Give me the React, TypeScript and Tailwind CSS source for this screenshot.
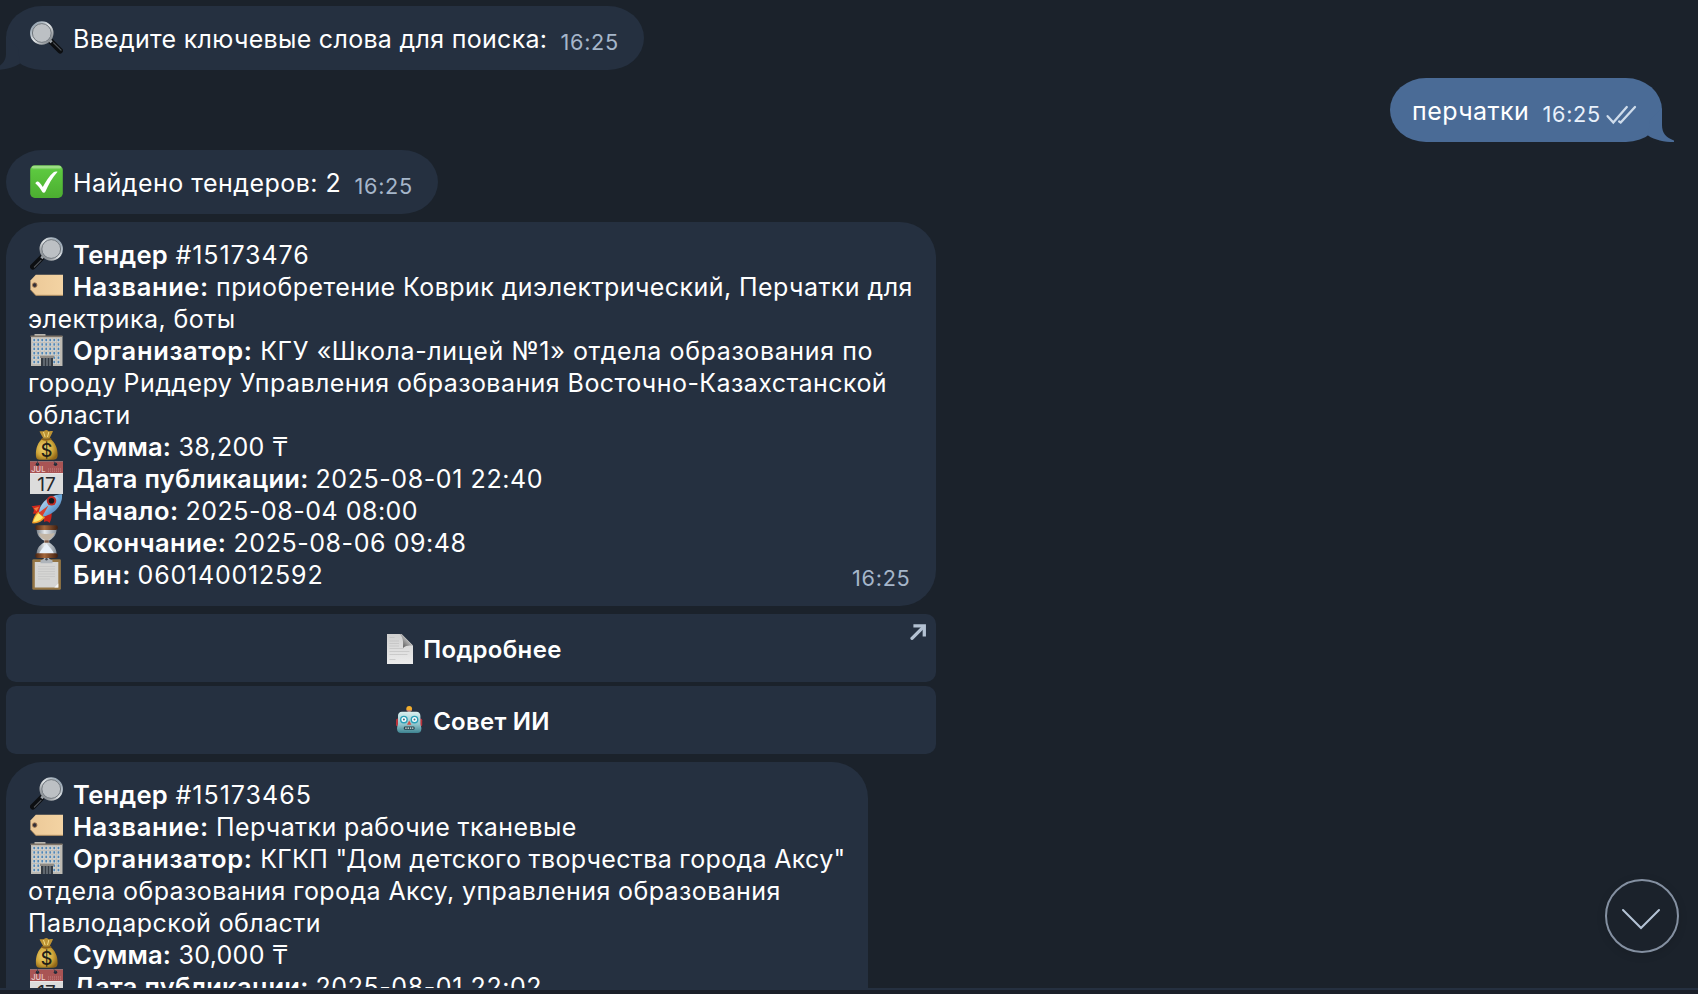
import type { ReactNode } from "react";

type IconProps = { className?: string };

const ICON = "h-[33px] w-[33px] shrink-0";

function Gradients() {
  return (
    <svg className="absolute h-0 w-0" aria-hidden="true">
      <defs>
        <linearGradient id="green" x1="0" y1="0" x2="0" y2="1">
          <stop offset="0" stopColor="#7fd262" />
          <stop offset=".16" stopColor="#5cc83f" />
          <stop offset="1" stopColor="#4cae31" />
        </linearGradient>
        <linearGradient id="rim" x1="0" y1="0" x2="1" y2="1">
          <stop offset="0" stopColor="#7d8fa0" />
          <stop offset=".5" stopColor="#e3e6e8" />
          <stop offset="1" stopColor="#6a7076" />
        </linearGradient>
        <linearGradient id="tag" x1="0" y1="0" x2="1" y2="0">
          <stop offset="0" stopColor="#ecc998" />
          <stop offset="1" stopColor="#f3d3a3" />
        </linearGradient>
        <radialGradient id="gold" cx=".4" cy=".45" r=".65">
          <stop offset="0" stopColor="#f0d878" />
          <stop offset=".6" stopColor="#d0a63a" />
          <stop offset="1" stopColor="#8e6516" />
        </radialGradient>
        <linearGradient id="hull" x1="0" y1="0" x2="1" y2="1">
          <stop offset="0" stopColor="#d5e9f8" />
          <stop offset=".5" stopColor="#7fb4e0" />
          <stop offset="1" stopColor="#2f62a5" />
        </linearGradient>
        <linearGradient id="glass" x1="0" y1="0" x2="1" y2="0">
          <stop offset="0" stopColor="#7b838c" />
          <stop offset=".4" stopColor="#e6e9ec" />
          <stop offset="1" stopColor="#88919b" />
        </linearGradient>
        <linearGradient id="wood" x1="0" y1="0" x2="1" y2="0">
          <stop offset="0" stopColor="#4a2412" />
          <stop offset=".4" stopColor="#a4673c" />
          <stop offset="1" stopColor="#3f1e0f" />
        </linearGradient>
        <linearGradient id="robot" x1="0" y1="0" x2="0" y2="1">
          <stop offset="0" stopColor="#d9eff0" />
          <stop offset=".6" stopColor="#8fc4cb" />
          <stop offset="1" stopColor="#3c8290" />
        </linearGradient>
        <linearGradient id="page" x1="0" y1="0" x2="0" y2="1">
          <stop offset="0" stopColor="#cfcfcf" />
          <stop offset="1" stopColor="#ececec" />
        </linearGradient>
        <linearGradient id="curl" x1="0" y1="1" x2="1" y2="0">
          <stop offset="0" stopColor="#3d3d3d" />
          <stop offset=".5" stopColor="#a5a5a5" />
          <stop offset="1" stopColor="#f5f5f5" />
        </linearGradient>
      </defs>
    </svg>
  );
}

function LensLeft({ className = ICON }: IconProps) {
  return (
    <svg viewBox="0 0 33 33" className={className}>
      <path d="M21 20.5 30.2 29.8" stroke="#0c0e11" strokeWidth="5.6" strokeLinecap="round" />
      <path d="M23.6 21.8 31 29.2" stroke="#4d5157" strokeWidth="1.2" strokeLinecap="round" />
      <path d="m18.6 18.2 3 3" stroke="#9ea4aa" strokeWidth="3" />
      <circle cx="11.8" cy="12" r="10.7" fill="#b5babe" stroke="url(#rim)" strokeWidth="2.1" />
      <circle cx="11.8" cy="12" r="9.4" fill="#bcc0c4" stroke="#686e75" strokeWidth=".9" />
    </svg>
  );
}

function LensRight({ className = ICON }: IconProps) {
  return (
    <svg viewBox="0 0 33 33" className={className}>
      <g transform="matrix(-1 0 0 1 33 0)">
        <path d="M21 20.5 30.2 29.8" stroke="#0c0e11" strokeWidth="5.6" strokeLinecap="round" />
        <path d="M22 23.4 28.6 30" stroke="#4d5157" strokeWidth="1.2" strokeLinecap="round" />
        <path d="m18.6 18.2 3 3" stroke="#9ea4aa" strokeWidth="3" />
        <circle cx="11.8" cy="12" r="10.7" fill="#b5babe" stroke="url(#rim)" strokeWidth="2.1" />
        <circle cx="11.8" cy="12" r="9.4" fill="#bcc0c4" stroke="#686e75" strokeWidth=".9" />
      </g>
    </svg>
  );
}

function CheckBox({ className = ICON }: IconProps) {
  return (
    <svg viewBox="0 0 33 33" className={className}>
      <rect x=".2" y=".3" width="32.6" height="32.6" rx="4.6" fill="url(#green)" />
      <rect x="2" y="1" width="29" height="2.6" rx="1.3" fill="#a9e394" opacity=".75" />
      <path d="M5.300 18.200c1-1.600 2.600-2.200 3.900-1 1.400 1.300 2.500 3 3.600 4.900C15.700 16.300 19.300 11 23.600 7.200c1.100-.9 2.700-1 4-.5-5.200 5.700-9 12.500-12.400 20.300-.4.900-2.300 1-2.900 0-2-3.500-4.100-6.300-7-8.800z" fill="#fff" />
    </svg>
  );
}

function TagIcon({ className = ICON }: IconProps) {
  return (
    <svg viewBox="0 0 33 33" className={className}>
      <path d="M5.800 5.800H33v20.600H5.800L.4 20.600v-9z" fill="url(#tag)" />
      <path d="M5.800 26.300H33M.4 20.600l5.400 5.700" stroke="#b48e5c" strokeWidth=".8" fill="none" />
      <circle cx="4.700" cy="16.100" r="2.300" fill="#33303a" stroke="#a57b52" strokeWidth=".9" />
    </svg>
  );
}

function Building({ className = ICON }: IconProps) {
  const cols = [2.600, 6.600, 10.600, 14.600, 18.600, 22.600, 26.800];
  const rows = [5.4, 9.800, 14.200, 18.600, 23, 27.400];
  return (
    <svg viewBox="0 0 33 33" className={className}>
      <path d="M4.500 1h11v2.500h-11z" fill="#b9b6af" />
      <path d="M1 3h31.500v30H1z" fill="#bdbab3" />
      <path d="M.5 2.600h32v1.500H.5z" fill="#7f7468" />
      {rows.map((y) =>
        cols.map((x) => (
          <g key={`${x}-${y}`}>
            <rect x={x} y={y} width="3.200" height="3.500" fill="#e6e4de" />
            <rect x={x + 0.7} y={y + 0.4} width="1.900" height="2.500" fill="#5286b5" />
          </g>
        )),
      )}
      <path d="M11 24.300h12V33H11z" fill="#353b43" />
      <path d="M10 22.800h14v2.200H10z" fill="#8f8b86" />
      <path d="M14 25v8M17 25v8M20 25v8" stroke="#8b949c" strokeWidth="1" />
    </svg>
  );
}

function MoneyBag({ className = ICON }: IconProps) {
  return (
    <svg viewBox="0 0 33 33" className={className}>
      <path d="M9.500 2.500c2.500-.8 4 .6 5.300-.9 1.300-1.200 2.500-.2 3.500.4 1.500.8 3-.5 4.700.3-1 2.500-2.500 5-3.600 7.200h-6c-1.200-2.200-2.800-4.500-3.900-7z" fill="#bd9334" />
      <path d="m13.500 3 1.600 5M18.800 3l-1.300 5" stroke="#f3db83" strokeWidth="1" />
      <path d="M12.500 9.500h7.500c5 3.500 7.900 10 7.600 16.500-.1 4-2 4.800-5.600 4.800H10.500c-3.500 0-4.500-1.200-4.600-4.800-.2-6.500 2-13 6.600-16.500z" fill="url(#gold)" />
      <path d="M11.600 9.700c3 1.500 6.700 1.300 9.600-.2" stroke="#8b5f18" strokeWidth="1.600" fill="none" />
      <text x="16.500" y="28" textAnchor="middle" className="fill-[#222018] font-['Inter'] text-[18px] font-medium">$</text>
    </svg>
  );
}

function CalendarIcon({ className = ICON }: IconProps) {
  return (
    <svg viewBox="0 0 33 33" className={className}>
      <path d="M0 .5h33v32.500H0z" fill="#dcdcdc" />
      <path d="M0 .5h33v11.800H0z" fill="#a95454" />
      <path d="M0 12.300h33v.8H0z" fill="#f5f5f5" />
      <circle cx="7.500" cy="3.300" r="1.700" fill="#232a38" />
      <circle cx="25.500" cy="3.300" r="1.700" fill="#232a38" />
      <path d="M7.500 3V.4M25.500 3 24 .4" stroke="#3d4250" strokeWidth="1" />
      <path d="M18 8h13.500M18 10.200h13.500" stroke="#c58080" strokeWidth="1" strokeDasharray="1 1" />
      <text x="1.300" y="11.300" className="fill-[#e9cccc] font-['Inter'] text-[7.500px] font-medium">JUL</text>
      <text x="16.500" y="29.800" textAnchor="middle" className="fill-[#26282c] font-['Inter'] text-[19px]">17</text>
    </svg>
  );
}

function Rocket({ className = ICON }: IconProps) {
  return (
    <svg viewBox="0 0 33 33" className={className}>
      <path d="M10.500 12 1.500 13.300C3.500 15 5 17.500 2.800 20.500l5.700.5z" fill="#d3281c" />
      <path d="M3.800 15.300 9 13.800l-2.500 4.700z" fill="#f07a3c" />
      <path d="M14 23.500 21.500 19.500c.5 4-.3 7.500-2 10.500-1.500-1.700-3.200-2.200-5.500-1z" fill="#c8231b" />
      <path d="M8.500 18.500c-3 2-5.500 7-6.500 11.800 4.500.8 10-1.500 13-5.800z" fill="#f09a25" />
      <path d="M8.800 20C6 22 4 26 3.200 29.100 7 29 10.500 27.500 13 24.600z" fill="#fbe86e" />
      <path d="M32 1.500c.6 8-3.500 14.500-10 18.500-2.500 1.600-5.500 2.900-8 3.500l-5-5.100C10.500 9.500 19 2 32 1.500z" fill="url(#hull)" />
      <path d="M32 1.500c-2.500 0-5 .4-7 1 2.500 1 4.700 3 5.800 5.200.8-2 1.200-4 1.200-6.200z" fill="#6aa5d8" />
      <circle cx="21.500" cy="7.800" r="4.800" fill="#bf2a22" />
      <circle cx="21.500" cy="7.800" r="2.800" fill="#14171d" />
      <path d="M8.500 20 18.500 12.500 12.500 23z" fill="#d8402c" />
    </svg>
  );
}

function Hourglass({ className = ICON }: IconProps) {
  return (
    <svg viewBox="0 0 33 33" className={className}>
      <path d="M6.800 3h19.700c.4 5.500-1.800 9.500-7.300 12.600v2C24.700 21 27 25 26.500 30H6.800c-.5-5 1.500-9 7.200-12.400v-2C8.300 12.500 6.300 8.500 6.800 3z" fill="url(#glass)" />
      <path d="M8.500 8c5 1.400 11 1.400 16.200 0-1 3.400-3.700 5.600-7.300 7.400h-1.600C12 13.700 9.500 11.400 8.500 8z" fill="#c3b6a6" />
      <path d="M14.300 15.300h4.500v2.400h-4.500z" fill="#7d5a46" />
      <path d="M16.600 18.500c2.500 3.500 6 6 7.500 10.500H9c1.500-4.500 5-7 7.600-10.500z" fill="#e9f1fa" />
      <rect x="5.300" y=".3" width="22.500" height="4.700" rx="1.900" fill="url(#wood)" />
      <rect x="5.300" y="28.300" width="22.500" height="4.600" rx="1.900" fill="url(#wood)" />
    </svg>
  );
}

function Clipboard({ className = ICON }: IconProps) {
  return (
    <svg viewBox="0 0 33 33" className={className}>
      <rect x="2.300" y="2.300" width="28.600" height="30.500" rx="1.300" fill="#947544" />
      <path d="M4.800 5h23.500v25.500H4.800z" fill="#d5d5d3" />
      <path d="M8 9.500h17M8 12h17M8 14.500h17M8 17h17M8 19.500h17M8 22h12" stroke="#c3c3c1" strokeWidth=".7" />
      <path d="m28.300 26.500-4 4h4z" fill="#f6f6f6" />
      <path d="M10.500 3.300c2-.3 3-.8 3.500-2.300h5c.5 1.500 1.500 2 3.500 2.300v2.900h-12z" fill="#aeb4ba" />
      <circle cx="16.500" cy="2.300" r="1.200" fill="#454b55" />
    </svg>
  );
}

function PageIcon() {
  return (
    <svg viewBox="0 0 30 32" className="mt-px h-8 w-[30px] shrink-0">
      <path d="M2 1h14.500L28 12.500V31H2z" fill="url(#page)" />
      <path d="M4.500 4.500h5M4.500 8h9.500M4.500 10.500h9.500M4.500 13h9.500M4.500 15.500h14M4.500 18.500h20M4.500 21.500h18M4.500 26.500h6" stroke="#c0c0c0" strokeWidth=".7" />
      <path d="M14.500 1c3.500 2.500 4 8 3.500 14 3-2.500 7-3 10-2L16.500 1z" fill="url(#curl)" />
    </svg>
  );
}

function RobotIcon() {
  return (
    <svg viewBox="0 0 30 30" className="h-[30px] w-[30px] shrink-0">
      <path d="M13.700 4h3v4h-3z" fill="#55505c" />
      <circle cx="15.200" cy="3.800" r="2.900" fill="#f3ae2d" />
      <path d="M12.400 4.600c1.700 1.300 3.900 1.300 5.600 0-.5 2.400-5 3-5.600 0z" fill="#b66a90" />
      <rect x="2" y="13.500" width="4" height="8" rx="1.800" fill="#b9323b" />
      <rect x="24.200" y="13.500" width="4" height="8" rx="1.800" fill="#b9323b" />
      <path d="M8 6.800h14.400c2.600 0 4 1.600 4 4.300v8c0 1.300 1 2.500 1 4.500 0 3-1.500 4.500-4 4.500H7c-2.500 0-4-1.500-4-4.500 0-2 1-3.200 1-4.500v-8c0-2.700 1.400-4.300 4-4.300z" fill="url(#robot)" />
      <circle cx="9.900" cy="14.600" r="3.900" fill="#2a9fb8" />
      <circle cx="20.500" cy="14.600" r="3.900" fill="#2a9fb8" />
      <circle cx="9.900" cy="14.600" r="2.500" fill="#f4fdff" />
      <circle cx="20.500" cy="14.600" r="2.500" fill="#f4fdff" />
      <circle cx="9.900" cy="14.600" r="1" fill="#4a6a75" />
      <circle cx="20.500" cy="14.600" r="1" fill="#4a6a75" />
      <path d="m15.200 15.500 2.200 4.300H13z" fill="#d64f45" />
      <rect x="9.800" y="21.500" width="10.800" height="3.200" rx="1.300" fill="#26414b" />
      <path d="M11.200 23.100h8.200" stroke="#e8f4f4" strokeWidth="1.400" strokeDasharray="1.500 .8" />
    </svg>
  );
}

function Time({ className = "" }: { className?: string }) {
  return <span className={`text-[21.700px] leading-8 tracking-[0.700px] text-[#a6b6ca] ${className}`}>16:25</span>;
}

function Row({ icon, children }: { icon?: ReactNode; children: ReactNode }) {
  return (
    <div className="flex h-8 items-start whitespace-nowrap leading-8">
      {icon && <span className="-mt-[2px] mr-[10px] ml-[2px] flex shrink-0">{icon}</span>}
      {children}
    </div>
  );
}

function Label({ className, children }: { className: string; children: ReactNode }) {
  return <b className={`shrink-0 text-[25.500px] font-semibold ${className}`}>{children}</b>;
}

function ActionButton({ className, children }: { className: string; children: ReactNode }) {
  return (
    <button className={`relative flex h-[68px] w-[930px] items-center justify-center rounded-[10px] bg-[#253040] text-[24px] font-semibold ${className}`}>
      {children}
    </button>
  );
}

export default function App() {
  return (
    <div className="flex h-[994px] w-full flex-col overflow-hidden bg-[#1b222b] font-['Inter','Liberation_Sans',sans-serif] text-[25px] text-white">
      <Gradients />
      <main className="relative flex h-[988px] shrink-0 flex-col items-start gap-2 overflow-hidden pt-[6px] pl-[6px]">
        <section className="relative h-16 w-[638px] shrink-0 rounded-[36px/32px] bg-[#253040] pt-[17px] pl-[22px]">
          <svg viewBox="0 0 32 34" className="absolute bottom-0 -left-3 h-[34px] w-8">
            <path d="M12 0v17c0 8-4 12.500-12 15.600V34c10 0 19-1.800 26-6.500L24 12z" fill="#253040" />
          </svg>
          <Row icon={<LensLeft />}>
            <span className="w-[487.500px] tracking-[0.300px]">Введите ключевые слова для поиска:</span>
            <Time className="mt-[3px]" />
          </Row>
        </section>

        <section className="relative mr-9 h-16 w-[272px] shrink-0 self-end rounded-[36px/32px] bg-[#4a6b96] pt-[17px] pl-[22px]">
          <svg viewBox="0 0 32 34" className="absolute -right-3 bottom-0 h-[34px] w-8">
            <path d="M20 0v17c0 8 4 12.500 12 15.600V34c-10 0-19-1.800-26-6.500L8 12z" fill="#4a6b96" />
          </svg>
          <Row>
            <span className="w-[130.500px] tracking-[0.450px]">перчатки</span>
            <span className="mt-[3px] text-[21.700px] tracking-[0.700px] text-[#e9f1fb]">16:25</span>
            <svg viewBox="0 0 32 20" className="mt-[10px] ml-[4px] h-5 w-8 shrink-0" fill="none" stroke="#cfdceb" strokeWidth="2.300" strokeLinecap="round">
              <path d="m2.600 11.200 5.700 6.300L21.800 2M14.200 16.500l1.500 1L30 2" />
            </svg>
          </Row>
        </section>

        <section className="h-16 w-[432px] shrink-0 rounded-[36px/32px] bg-[#253040] pt-[17px] pl-[22px]">
          <Row icon={<CheckBox />}>
            <span className="w-[281.500px] tracking-[0.470px]">Найдено тендеров: 2</span>
            <Time className="mt-[3px]" />
          </Row>
        </section>

        <section className="relative h-[384px] w-[930px] shrink-0 rounded-[36px] bg-[#253040] pt-[17px] pl-[22px]">
          <Row icon={<LensRight />}>
            <Label className="w-[102.500px] tracking-[0.300px]">Тендер</Label>
            <span className="tracking-[0.900px]">#15173476</span>
          </Row>
          <Row icon={<TagIcon />}>
            <Label className="w-[143px] tracking-[0.600px]">Название:</Label>
            <span className="tracking-[0.435px]">приобретение Коврик диэлектрический, Перчатки для</span>
          </Row>
          <Row><span className="tracking-[0.450px]">электрика, боты</span></Row>
          <Row icon={<Building />}>
            <Label className="w-[187.200px] tracking-[0.640px]">Организатор:</Label>
            <span className="tracking-[0.610px]">КГУ «Школа-лицей №1» отдела образования по</span>
          </Row>
          <Row><span className="tracking-[0.435px]">городу Риддеру Управления образования Восточно-Казахстанской</span></Row>
          <Row><span className="tracking-[0.500px]">области</span></Row>
          <Row icon={<MoneyBag />}>
            <Label className="w-[105.500px] tracking-[0.100px]">Сумма:</Label>
            <span className="tracking-[0.300px]">38,200 ₸</span>
          </Row>
          <Row icon={<CalendarIcon />}>
            <Label className="w-[242.500px] tracking-[0.310px]">Дата публикации:</Label>
            <span className="tracking-[0.580px]">2025-08-01 22:40</span>
          </Row>
          <Row icon={<Rocket />}>
            <Label className="w-[112.500px] tracking-[0.480px]">Начало:</Label>
            <span className="tracking-[0.500px]">2025-08-04 08:00</span>
          </Row>
          <Row icon={<Hourglass />}>
            <Label className="w-[160.500px] tracking-[0.440px]">Окончание:</Label>
            <span className="tracking-[0.560px]">2025-08-06 09:48</span>
          </Row>
          <Row icon={<Clipboard />}>
            <Label className="w-[64.600px] tracking-[0.500px]">Бин:</Label>
            <span className="tracking-[0.800px]">060140012592</span>
            <Time className="mt-[3px] mr-[25.500px] ml-auto" />
          </Row>
        </section>

        <div className="flex shrink-0 flex-col gap-1">
          <ActionButton className="pl-[5px]">
            <PageIcon />
            <span className="mt-[4px] ml-2 tracking-[0.330px]">Подробнее</span>
            <svg viewBox="0 0 16 16" className="absolute top-[10px] right-[10px] h-4 w-4" fill="none" stroke="#b3c1d2" strokeWidth="3.300">
              <path d="M2 14.300 13.500 2.800" strokeLinecap="round" />
              <path d="M3.400 1.800h10.900V12.400" strokeLinejoin="miter" />
            </svg>
          </ActionButton>
          <ActionButton className="pl-[2px]">
            <RobotIcon />
            <span className="mt-[4px] ml-[9px] tracking-[0.250px]">Совет ИИ</span>
          </ActionButton>
        </div>

        <section className="h-[384px] w-[862px] shrink-0 rounded-[36px] bg-[#253040] pt-[17px] pl-[22px]">
          <Row icon={<LensRight />}>
            <Label className="w-[102.500px] tracking-[0.300px]">Тендер</Label>
            <span className="tracking-[1px]">#15173465</span>
          </Row>
          <Row icon={<TagIcon />}>
            <Label className="w-[143px] tracking-[0.600px]">Название:</Label>
            <span className="tracking-[0.380px]">Перчатки рабочие тканевые</span>
          </Row>
          <Row icon={<Building />}>
            <Label className="w-[187.200px] tracking-[0.640px]">Организатор:</Label>
            <span className="tracking-[0.325px]">КГКП "Дом детского творчества города Аксу"</span>
          </Row>
          <Row><span className="tracking-[0.390px]">отдела образования города Аксу, управления образования</span></Row>
          <Row><span className="tracking-[0.420px]">Павлодарской области</span></Row>
          <Row icon={<MoneyBag />}>
            <Label className="w-[105.500px] tracking-[0.100px]">Сумма:</Label>
            <span className="tracking-[0.300px]">30,000 ₸</span>
          </Row>
          <Row icon={<CalendarIcon />}>
            <Label className="w-[242.500px] tracking-[0.310px]">Дата публикации:</Label>
            <span className="tracking-[0.580px]">2025-08-01 22:02</span>
          </Row>
        </section>

        <button className="absolute right-[19px] bottom-[35px] flex h-[74px] w-[74px] items-center justify-center rounded-full border-2 border-[#8490a1] bg-[#1b222b] shadow-[0_2px_10px_rgba(0,0,0,0.12)]">
          <svg viewBox="0 0 40 22" className="mt-[6px] mr-[2px] h-[22px] w-10" fill="none" stroke="#b4c3d5" strokeWidth="2" strokeLinecap="round">
            <path d="m2 2 18 18L38 2" />
          </svg>
        </button>
      </main>
      <footer className="h-[6px] shrink-0 border-t-2 border-[#253040] bg-[#1b1f29]" />
    </div>
  );
}
